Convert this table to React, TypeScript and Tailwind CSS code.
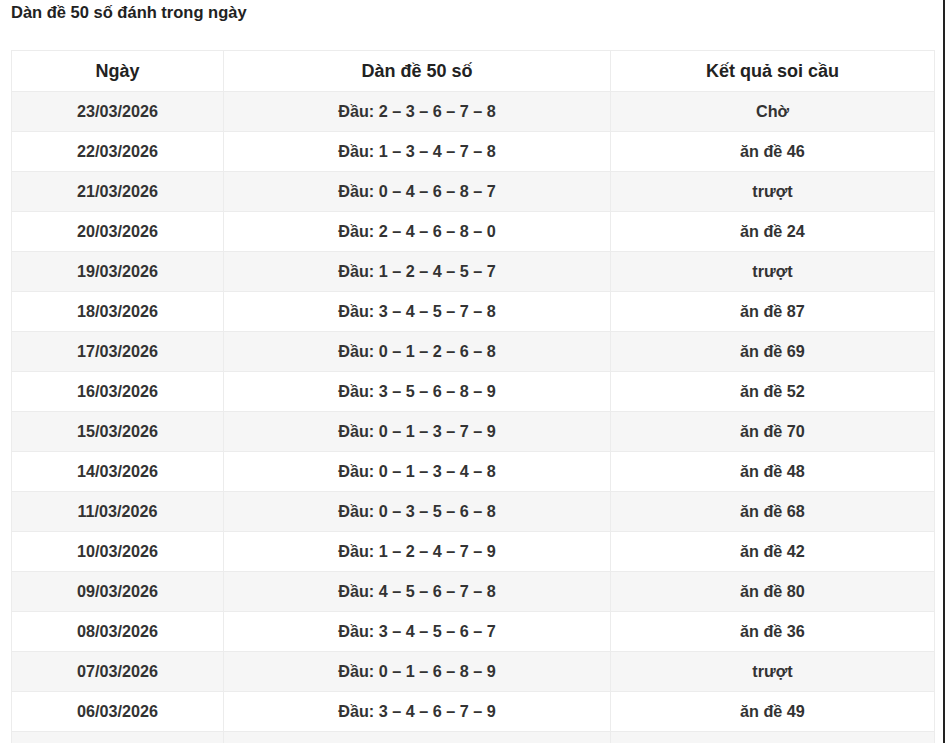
import React from "react";

const rows: [string, string, string][] = [
  ["23/03/2026", "Đầu: 2 – 3 – 6 – 7 – 8", "Chờ"],
  ["22/03/2026", "Đầu: 1 – 3 – 4 – 7 – 8", "ăn đề 46"],
  ["21/03/2026", "Đầu: 0 – 4 – 6 – 8 – 7", "trượt"],
  ["20/03/2026", "Đầu: 2 – 4 – 6 – 8 – 0", "ăn đề 24"],
  ["19/03/2026", "Đầu: 1 – 2 – 4 – 5 – 7", "trượt"],
  ["18/03/2026", "Đầu: 3 – 4 – 5 – 7 – 8", "ăn đề 87"],
  ["17/03/2026", "Đầu: 0 – 1 – 2 – 6 – 8", "ăn đề 69"],
  ["16/03/2026", "Đầu: 3 – 5 – 6 – 8 – 9", "ăn đề 52"],
  ["15/03/2026", "Đầu: 0 – 1 – 3 – 7 – 9", "ăn đề 70"],
  ["14/03/2026", "Đầu: 0 – 1 – 3 – 4 – 8", "ăn đề 48"],
  ["11/03/2026", "Đầu: 0 – 3 – 5 – 6 – 8", "ăn đề 68"],
  ["10/03/2026", "Đầu: 1 – 2 – 4 – 7 – 9", "ăn đề 42"],
  ["09/03/2026", "Đầu: 4 – 5 – 6 – 7 – 8", "ăn đề 80"],
  ["08/03/2026", "Đầu: 3 – 4 – 5 – 6 – 7", "ăn đề 36"],
  ["07/03/2026", "Đầu: 0 – 1 – 6 – 8 – 9", "trượt"],
  ["06/03/2026", "Đầu: 3 – 4 – 6 – 7 – 9", "ăn đề 49"],
  ["", "", ""],
];

export default function App() {
  return (
    <div
      className="h-[743px] w-[947px] overflow-hidden bg-white text-[#333]"
      style={{ fontFamily: '"Liberation Sans", Arial, sans-serif' }}
    >
      <div className="h-full w-[945px] border-r-2 border-[#222] pl-[11px] pr-[11px]">
        <h1 className="pt-[2px] text-[16.5px] font-bold leading-[20px] text-[#222]">
          Dàn đề 50 số đánh trong ngày
        </h1>
        <table className="mt-[28px] w-[923px] table-fixed border-collapse">
          <colgroup>
            <col className="w-[212px]" />
            <col className="w-[387px]" />
            <col className="w-[324px]" />
          </colgroup>
          <thead>
            <tr className="h-[41px] bg-white">
              <th className="border border-[#ececec] text-center text-[18px] font-bold text-[#222]">Ngày</th>
              <th className="border border-[#ececec] text-center text-[18px] font-bold text-[#222]">Dàn đề 50 số</th>
              <th className="border border-[#ececec] text-center text-[18px] font-bold text-[#222]">Kết quả soi cầu</th>
            </tr>
          </thead>
          <tbody>
            {rows.map((r, i) => (
              <tr key={i} className={i % 2 === 0 ? "h-[40px] bg-[#f6f6f6]" : "h-[40px] bg-white"}>
                <td className="border border-[#ececec] text-center text-[16.2px] font-bold">{r[0]}</td>
                <td className="border border-[#ececec] text-center text-[16.2px] font-bold">{r[1]}</td>
                <td className="border border-[#ececec] text-center text-[16.2px] font-bold">{r[2]}</td>
              </tr>
            ))}
          </tbody>
        </table>
      </div>
    </div>
  );
}
